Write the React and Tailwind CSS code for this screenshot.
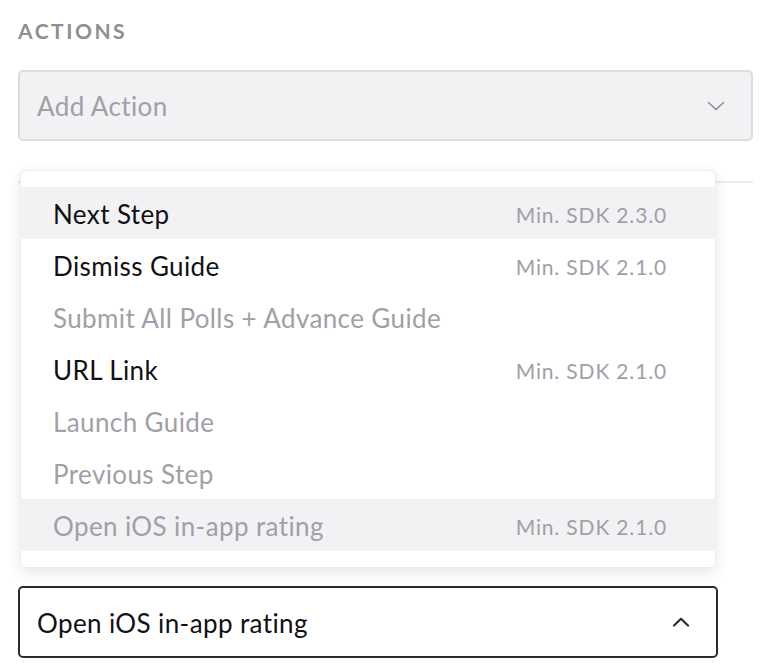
import React from "react";

const items = [
  { label: "Next Step", sdk: "Min. SDK 2.3.0", enabled: true, hl: true },
  { label: "Dismiss Guide", sdk: "Min. SDK 2.1.0", enabled: true },
  { label: "Submit All Polls + Advance Guide", enabled: false },
  { label: "URL Link", sdk: "Min. SDK 2.1.0", enabled: true },
  { label: "Launch Guide", enabled: false },
  { label: "Previous Step", enabled: false },
  { label: "Open iOS in-app rating", sdk: "Min. SDK 2.1.0", enabled: false, hl: true },
];

function ChevronDown({ className }) {
  return (
    <svg className={className} width="18" height="10" viewBox="0 0 18 10" fill="none">
      <path d="M1.5 1.5 L9 8.5 L16.5 1.5" stroke="currentColor" strokeWidth="1.6" strokeLinecap="round" strokeLinejoin="round" />
    </svg>
  );
}

function ChevronUp({ className }) {
  return (
    <svg className={className} width="18" height="10" viewBox="0 0 18 10" fill="none">
      <path d="M2 8.5 L9 1.8 L16 8.5" stroke="currentColor" strokeWidth="2.2" strokeLinecap="round" strokeLinejoin="round" />
    </svg>
  );
}

export default function App() {
  return (
    <div
      className="w-[768px] h-[672px] bg-white px-[18px] pt-[19px] overflow-hidden"
      style={{ fontFamily: "Lato, 'Open Sans', sans-serif" }}
    >
      <div className="text-[21px] leading-[24px] font-bold tracking-[0.12em] text-[#8e8e93]">ACTIONS</div>
      <div className="mt-[27px] h-[71px] w-[735px] rounded-[5px] border-2 border-[#dcdce1] bg-[#f2f2f5] flex items-center justify-between pl-[17px] pr-[26px]">
        <span className="text-[26px] tracking-[0.015em] text-[#a0a0a6] pt-[2px]">Add Action</span>
        <ChevronDown className="text-[#8e8e93]" />
      </div>
      <div className="mt-[40px] h-[2px] w-[735px] bg-[#ececef]" />
      <div className="relative mt-[403px] w-[700px]">
        <div className="absolute left-[2px] right-[2px] bottom-[calc(100%+18px)] rounded-[6px] bg-white border border-[#ededf0] py-[16px] shadow-[0_4px_14px_rgba(0,0,0,0.10)]">
          {items.map((it) => (
            <div
              key={it.label}
              className={
                "h-[52px] flex items-center justify-between pl-[32px] pr-[48px] " +
                (it.hl ? "bg-[#f2f2f5]" : "")
              }
            >
              <span className={"text-[26px] tracking-[0.015em] pt-[3px] " + (it.enabled ? "text-[#111114]" : "text-[#a0a0a6]")}>{it.label}</span>
              {it.sdk && <span className="text-[21px] tracking-[0.04em] pt-[3px] text-[#a0a0a6]">{it.sdk}</span>}
            </div>
          ))}
        </div>
        <div className="h-[72px] rounded-[5px] border-2 border-[#2a2c33] bg-white flex items-center justify-between pl-[17px] pr-[26px]">
          <span className="text-[26px] tracking-[0.015em] pt-[2px] text-[#111114]">Open iOS in-app rating</span>
          <ChevronUp className="text-[#2a2c33]" />
        </div>
      </div>
    </div>
  );
}
